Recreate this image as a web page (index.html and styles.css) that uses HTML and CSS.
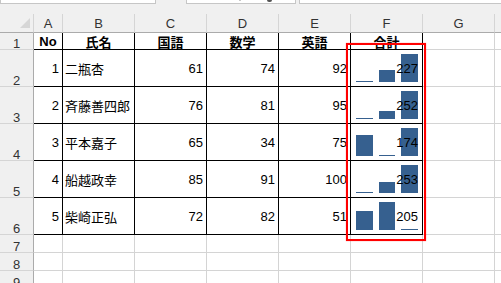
FILE: index.html
```html
<!DOCTYPE html>
<html lang="ja">
<head>
<meta charset="utf-8">
<title>Sheet</title>
<link rel="stylesheet" href="styles.css">
</head>
<body>
<div class="app">
  <div class="fbar">
    <div class="fbox namebox"></div>
    <div class="fbox midbox"><span class="tick"></span><span class="fx"></span></div>
    <div class="fbox formula"></div>
  </div>
  <div class="sheet">
    <div class="corner"><span class="tri"></span></div>
    <div class="ch">A</div><div class="ch">B</div><div class="ch">C</div><div class="ch">D</div><div class="ch">E</div><div class="ch">F</div><div class="ch">G</div><div class="ch"></div>

    <div class="rh">1</div>
    <div class="c t th">No</div><div class="c t th">氏名</div><div class="c t th">国語</div><div class="c t th">数学</div><div class="c t th">英語</div><div class="c t th">合計</div><div class="c"></div><div class="c"></div>

    <div class="rh">2</div>
    <div class="c t r">1</div><div class="c t l">二瓶杏</div><div class="c t r">61</div><div class="c t r">74</div><div class="c t r">92</div>
    <div class="c t sp"><div class="bars"><span class="bar" style="height:1px"></span><span class="bar" style="height:12px"></span><span class="bar" style="height:28px"></span></div><span class="tot">227</span></div>
    <div class="c"></div><div class="c"></div>

    <div class="rh">3</div>
    <div class="c t r">2</div><div class="c t l">斉藤善四郎</div><div class="c t r">76</div><div class="c t r">81</div><div class="c t r">95</div>
    <div class="c t sp"><div class="bars"><span class="bar" style="height:1px"></span><span class="bar" style="height:8px"></span><span class="bar" style="height:28px"></span></div><span class="tot">252</span></div>
    <div class="c"></div><div class="c"></div>

    <div class="rh">4</div>
    <div class="c t r">3</div><div class="c t l">平本嘉子</div><div class="c t r">65</div><div class="c t r">34</div><div class="c t r">75</div>
    <div class="c t sp"><div class="bars"><span class="bar" style="height:21px"></span><span class="bar" style="height:1px"></span><span class="bar" style="height:28px"></span></div><span class="tot">174</span></div>
    <div class="c"></div><div class="c"></div>

    <div class="rh">5</div>
    <div class="c t r">4</div><div class="c t l">船越政幸</div><div class="c t r">85</div><div class="c t r">91</div><div class="c t r">100</div>
    <div class="c t sp"><div class="bars"><span class="bar" style="height:1px"></span><span class="bar" style="height:11px"></span><span class="bar" style="height:28px"></span></div><span class="tot">253</span></div>
    <div class="c"></div><div class="c"></div>

    <div class="rh">6</div>
    <div class="c t r">5</div><div class="c t l">柴崎正弘</div><div class="c t r">72</div><div class="c t r">82</div><div class="c t r">51</div>
    <div class="c t sp"><div class="bars"><span class="bar" style="height:19px"></span><span class="bar" style="height:28px"></span><span class="bar" style="height:1px"></span></div><span class="tot">205</span></div>
    <div class="c"></div><div class="c"></div>

    <div class="rh">7</div>
    <div class="c"></div><div class="c"></div><div class="c"></div><div class="c"></div><div class="c"></div><div class="c"></div><div class="c"></div><div class="c"></div>
    <div class="rh">8</div>
    <div class="c"></div><div class="c"></div><div class="c"></div><div class="c"></div><div class="c"></div><div class="c"></div><div class="c"></div><div class="c"></div>
    <div class="rh">9</div>
    <div class="c"></div><div class="c"></div><div class="c"></div><div class="c"></div><div class="c"></div><div class="c"></div><div class="c"></div><div class="c"></div>
  </div>
  <div class="highlight"></div>
</div>
</body>
</html>
```

FILE: styles.css
```css
* { box-sizing: border-box; margin: 0; padding: 0; }
html, body { width: 501px; height: 283px; overflow: hidden; background: #fff; }
body {
  font-family: "Liberation Sans", "Noto Sans CJK JP", sans-serif;
  font-size: 13px;
  color: #000;
}
.app { position: relative; width: 501px; height: 283px; overflow: hidden; background: #fff; }

.fbar { height: 14px; background: #f0f0f0; display: flex; align-items: flex-start; }
.fbox { height: 4px; background: #fff; border: 1px solid #c6c6c6; border-top: 0; }
.namebox { width: 156px; }
.midbox { width: 110px; margin-left: 30px; display: flex; align-items: flex-start; }
.formula { flex: 1; margin-left: 3px; border-right: 0; }
.tick { width: 2px; height: 1px; margin-left: 52px; background: #c8c8c8; }
.fx { width: 5px; height: 2px; margin-left: 26px; background: #555; border-radius: 0 0 3px 3px; }

.sheet {
  display: grid;
  grid-template-columns: 34px 29px repeat(6, 72px) 1fr;
  grid-template-rows: 19px 17px repeat(5, 37px) repeat(3, 18px);
}

.corner {
  background: #f0f0f0;
  border-right: 1px solid #d5d5d5;
  border-bottom: 1px solid #ababab;
  display: flex;
  align-items: flex-end;
  justify-content: flex-end;
  padding: 0 3px 4px 0;
}
.tri {
  width: 0; height: 0;
  border-left: 10px solid transparent;
  border-bottom: 10px solid #d6d6d6;
}
.ch {
  background: #f0f0f0;
  border-right: 1px solid #d5d5d5;
  border-bottom: 1px solid #ababab;
  display: flex;
  align-items: center;
  justify-content: center;
  color: #333;
  font-size: 13px;
}
.rh {
  background: #f0f0f0;
  border-right: 1px solid #ababab;
  border-bottom: 1px solid #d5d5d5;
  display: flex;
  align-items: flex-end;
  justify-content: center;
  line-height: 11px;
  color: #333;
}

.c {
  border-right: 1px solid #d4d4d4;
  border-bottom: 1px solid #d4d4d4;
  display: flex;
  align-items: center;
  padding: 0 3px;
  white-space: nowrap;
  overflow: visible;
}
.t { border-right-color: #000; border-bottom-color: #000; }
.r { justify-content: flex-end; }
.l { justify-content: flex-start; padding-left: 2px; }
.th { font-weight: bold; justify-content: center; }

.sp { display: grid; padding: 0; }
.bars {
  grid-area: 1 / 1;
  display: flex;
  align-items: flex-end;
  gap: 6px;
  padding: 4px 4px 4px 5px;
}
.bar { flex: 1; background: #36608f; }
.tot { grid-area: 1 / 1; align-self: center; justify-self: end; padding-right: 4px; }

.highlight {
  position: absolute;
  left: 346px;
  top: 43px;
  width: 80px;
  height: 198px;
  border: 2px solid #ff0000;
  box-shadow: 0 0 1px rgba(255, 0, 0, 0.5);
  pointer-events: none;
}
```
